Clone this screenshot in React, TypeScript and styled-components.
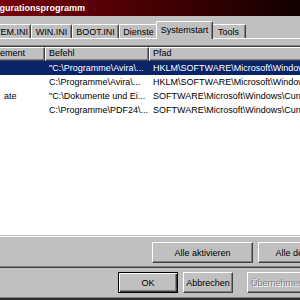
import React from "react";
import styled, { createGlobalStyle } from "styled-components";

const Global = createGlobalStyle`
  html, body { margin: 0; padding: 0; background: #c0c0c0; }
  body { width: 300px; height: 300px; overflow: hidden; }
`;

const Viewport = styled.div`
  width: 300px;
  height: 300px;
  overflow: hidden;
  background: #c0c0c0;
`;

const Window = styled.div`
  box-sizing: border-box;
  width: 450px;
  height: 300px;
  margin-left: -80px;
  background: #c0c0c0;
  border-bottom: 2px solid #303030;
  box-shadow: inset 0 -1px #808080;
  display: flex;
  flex-direction: column;
  font-family: "Liberation Sans", Arial, sans-serif;
  font-size: 9px;
  color: #000;
`;

const TitleBar = styled.div`
  height: 16px;
  flex: none;
  display: flex;
  align-items: center;
  padding-left: 26px;
  background: linear-gradient(to right, #8a0010 0%, #76000a 18%, #2a0000 70%, #120000 84%, #080000 100%);
  color: #fff;
  font-weight: bold;
  font-size: 9px;
  white-space: nowrap;
`;

const Body = styled.div`
  padding: 0 4px;
  display: flex;
  flex-direction: column;
`;

const TabStrip = styled.div`
  display: flex;
  align-items: flex-end;
  height: 17px;
  margin-top: 5px;
  padding-left: 2px;
`;

const Tab = styled.div<{ $w: number; $active?: boolean }>`
  box-sizing: border-box;
  flex: none;
  width: ${(p) => p.$w}px;
  height: ${(p) => (p.$active ? 18 : 14)}px;
  margin: ${(p) => (p.$active ? "0 -2px -1px" : "0")};
  padding-bottom: ${(p) => (p.$active ? 2 : 0)}px;
  position: relative;
  z-index: ${(p) => (p.$active ? 1 : 0)};
  background: #c0c0c0;
  border-top: 1px solid #fff;
  border-left: 1px solid #fff;
  border-right: 1px solid #404040;
  border-radius: 2px 2px 0 0;
  box-shadow: inset -1px 0 #808080;
  display: flex;
  justify-content: center;
  align-items: center;
  white-space: nowrap;
`;

const Page = styled.div`
  box-sizing: border-box;
  height: 230px;
  border: 1px solid;
  border-color: #fff #404040 #404040 #fff;
  box-shadow: inset -1px -1px #808080;
  padding: 6px 6px 4px;
  display: flex;
  flex-direction: column;
`;

const ListOuter = styled.div`
  box-sizing: border-box;
  height: 192px;
  flex: none;
  border: 1px solid;
  border-color: #808080 #fff #fff #808080;
`;

const ListInner = styled.div`
  box-sizing: border-box;
  height: 100%;
  border: 1px solid;
  border-color: #404040 #c0c0c0 #c0c0c0 #404040;
  background: #fff;
  overflow: hidden;
`;

const COLS = "112px 104px 1fr";

const HeaderRow = styled.div`
  display: grid;
  grid-template-columns: ${COLS};
`;

const HeaderCell = styled.div<{ $pad?: number }>`
  box-sizing: border-box;
  height: 14px;
  background: #c0c0c0;
  border: 1px solid;
  border-color: #fff #404040 #404040 #fff;
  box-shadow: inset -1px -1px #808080;
  padding-left: ${(p) => p.$pad ?? 3}px;
  line-height: 11px;
  white-space: nowrap;
  overflow: hidden;
`;

const Row = styled.div<{ $selected?: boolean }>`
  display: grid;
  grid-template-columns: ${COLS};
  height: 14px;
  line-height: 14px;
  background: ${(p) => (p.$selected ? "#0a246a" : "transparent")};
  color: ${(p) => (p.$selected ? "#fff" : "#000")};
`;

const Cell = styled.div<{ $pad?: number }>`
  padding-left: ${(p) => p.$pad ?? 4}px;
  white-space: nowrap;
  overflow: hidden;
`;

const PageButtons = styled.div`
  display: flex;
  justify-content: flex-end;
  gap: 5px;
  margin-top: 5px;
`;

const Button = styled.button<{ $w: number; $default?: boolean; $gap?: number }>`
  box-sizing: border-box;
  flex: none;
  width: ${(p) => p.$w}px;
  height: 21px;
  padding: 0;
  margin: 0 0 0 ${(p) => p.$gap ?? 0}px;
  font: inherit;
  color: #000;
  background: #c0c0c0;
  white-space: nowrap;
  overflow: hidden;
  border: 1px solid;
  border-color: ${(p) => (p.$default ? "#000" : "#fff #404040 #404040 #fff")};
  box-shadow: ${(p) =>
    p.$default
      ? "inset 1px 1px #fff, inset -1px -1px #404040, inset -2px -2px #808080"
      : "inset -1px -1px #808080"};
  &:disabled {
    color: #808080;
    text-shadow: 1px 1px #fff;
  }
`;

const DialogButtons = styled.div`
  display: flex;
  margin-top: 4px;
  padding-left: 194px;
`;

const rows = [
  { name: "", cmd: "\"C:\\Programme\\Avira\\...", path: "HKLM\\SOFTWARE\\Microsoft\\Windows\\CurrentVersion\\Run", selected: true },
  { name: "", cmd: "C:\\Programme\\Avira\\...", path: "HKLM\\SOFTWARE\\Microsoft\\Windows\\CurrentVersion\\Run" },
  { name: "ate", cmd: "\"C:\\Dokumente und Ei...", path: "SOFTWARE\\Microsoft\\Windows\\CurrentVersion\\Run" },
  { name: "", cmd: "C:\\Programme\\PDF24\\...", path: "SOFTWARE\\Microsoft\\Windows\\CurrentVersion\\Run" },
];

export default function App() {
  return (
    <Viewport>
      <Global />
      <Window>
        <TitleBar>Systemkonfigurationsprogramm</TitleBar>
        <Body>
          <TabStrip>
            <Tab $w={48}>Allgemein</Tab>
            <Tab $w={57}>SYSTEM.INI</Tab>
            <Tab $w={41}>WIN.INI</Tab>
            <Tab $w={47}>BOOT.INI</Tab>
            <Tab $w={39}>Dienste</Tab>
            <Tab $w={57} $active>Systemstart</Tab>
            <Tab $w={35}>Tools</Tab>
          </TabStrip>
          <Page>
            <ListOuter>
              <ListInner>
                <HeaderRow>
                  <HeaderCell $pad={58}>Element</HeaderCell>
                  <HeaderCell>Befehl</HeaderCell>
                  <HeaderCell>Pfad</HeaderCell>
                </HeaderRow>
                {rows.map((r, i) => (
                  <Row key={i} $selected={r.selected}>
                    <Cell $pad={71}>{r.name}</Cell>
                    <Cell>{r.cmd}</Cell>
                    <Cell>{r.path}</Cell>
                  </Row>
                ))}
              </ListInner>
            </ListOuter>
            <PageButtons>
              <Button $w={101}>Alle aktivieren</Button>
              <Button $w={101}>Alle deaktivieren</Button>
            </PageButtons>
          </Page>
          <DialogButtons>
            <Button $w={60} $default>OK</Button>
            <Button $w={50} $gap={5}>Abbrechen</Button>
            <Button $w={60} $gap={14} disabled>Übernehmen</Button>
            <Button $w={60} $gap={5}>Hilfe</Button>
          </DialogButtons>
        </Body>
      </Window>
    </Viewport>
  );
}
